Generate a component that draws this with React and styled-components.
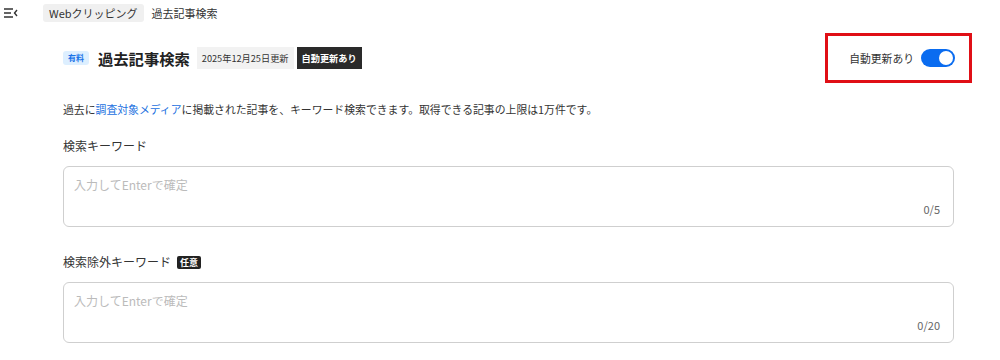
import React from 'react';
import styled, { createGlobalStyle } from 'styled-components';

const Global = createGlobalStyle`
  body {
    margin: 0;
    background: #fff;
    font-family: "Noto Sans CJK JP", "Noto Sans", sans-serif;
    color: #333;
  }
`;

const Page = styled.div`
  width: 1000px;
  height: 360px;
  overflow: hidden;
`;

const Crumbs = styled.div`
  display: flex;
  align-items: center;
  height: 26px;
  padding-left: 4px;
  font-size: 11px;
  line-height: 18px;
  color: #333;
`;

const MenuIcon = styled.svg`
  width: 14px;
  height: 10px;
  margin-right: 25px;
`;

const Chip = styled.span`
  background: #f0f0f0;
  border-radius: 3px;
  padding: 0 6px;
  margin-right: 8px;
`;

const Content = styled.div`
  width: 891px;
  margin-left: 63px;
`;

const Head = styled.div`
  display: flex;
  align-items: center;
  justify-content: space-between;
  margin-top: 7px;
  height: 50px;
`;

const TitleGroup = styled.div`
  display: flex;
  align-items: center;
`;

const Paid = styled.span`
  background: #ddefff;
  color: #1a73e8;
  font-size: 8px;
  font-weight: 700;
  line-height: 14px;
  padding: 0 5px;
  border-radius: 3px;
  margin-right: 9px;
`;

const Title = styled.h1`
  margin: 0 7px 0 0;
  font-size: 15.3px;
  font-weight: 700;
  line-height: 22px;
  color: #222;
`;

const Tag = styled.span`
  font-size: ${p => (p.dark ? 9.2 : 9.2)}px;
  line-height: 22px;
  padding: 0 5px;
  background: ${p => (p.dark ? '#2a2a2a' : '#f2f2f2')};
  color: ${p => (p.dark ? '#fff' : '#333')};
  font-weight: ${p => (p.dark ? 700 : 400)};
  margin-right: 3px;
`;

const Highlight = styled.div`
  display: flex;
  align-items: center;
  gap: 7px;
  border: 3px solid #e00f16;
  height: 44px;
  padding: 0 14px 0 21px;
  margin-right: -18px;
  font-size: 10.8px;
  color: #333;
`;

const Switch = styled.span`
  position: relative;
  width: 34px;
  height: 18px;
  border-radius: 9px;
  background: #0a6cf0;
  &::after {
    content: '';
    position: absolute;
    right: 2px;
    top: 2px;
    width: 14px;
    height: 14px;
    border-radius: 50%;
    background: #fff;
  }
`;

const Lead = styled.p`
  margin: 17px 0 0;
  font-size: 10.85px;
  line-height: 18px;
  color: #333;
`;

const Link = styled.span`
  color: #1a6fe0;
`;

const Label = styled.div`
  display: flex;
  align-items: center;
  gap: 6px;
  font-size: 12px;
  line-height: 20px;
  color: #333;
  margin-top: ${p => p.gap}px;
`;

const Optional = styled.span`
  background: #222;
  color: #fff;
  font-size: 9px;
  font-weight: 700;
  line-height: 13px;
  padding: 0 3px;
  border-radius: 2px;
`;

const Field = styled.div`
  position: relative;
  box-sizing: border-box;
  height: 61px;
  margin-top: 10px;
  border: 1px solid #cfcfcf;
  border-radius: 6px;
  padding: 9px 10px;
  font-size: 12px;
  line-height: 18px;
  color: #bbb;
`;

const Count = styled.span`
  position: absolute;
  right: 13px;
  bottom: 8px;
  font-size: 11px;
  color: #666;
`;

export default function App() {
  return (
    <Page>
      <Global />
      <Crumbs>
        <MenuIcon viewBox="0 0 14 10">
          <path d="M0 1h9M0 5h7M0 9h9" stroke="#333" strokeWidth="1.4" fill="none" />
          <path d="M13 2 L10.5 5 L13 8" stroke="#333" strokeWidth="1.4" fill="none" />
        </MenuIcon>
        <Chip>Webクリッピング</Chip>
        <span>過去記事検索</span>
      </Crumbs>
      <Content>
        <Head>
          <TitleGroup>
            <Paid>有料</Paid>
            <Title>過去記事検索</Title>
            <Tag>2025年12月25日更新</Tag>
            <Tag dark>自動更新あり</Tag>
          </TitleGroup>
          <Highlight>
            自動更新あり
            <Switch />
          </Highlight>
        </Head>
        <Lead>
          過去に<Link>調査対象メディア</Link>に掲載された記事を、キーワード検索できます。取得できる記事の上限は1万件です。
        </Lead>
        <Label gap={18}>検索キーワード</Label>
        <Field>
          入力してEnterで確定
          <Count>0/5</Count>
        </Field>
        <Label gap={25}>
          検索除外キーワード<Optional>任意</Optional>
        </Label>
        <Field>
          入力してEnterで確定
          <Count>0/20</Count>
        </Field>
      </Content>
    </Page>
  );
}
